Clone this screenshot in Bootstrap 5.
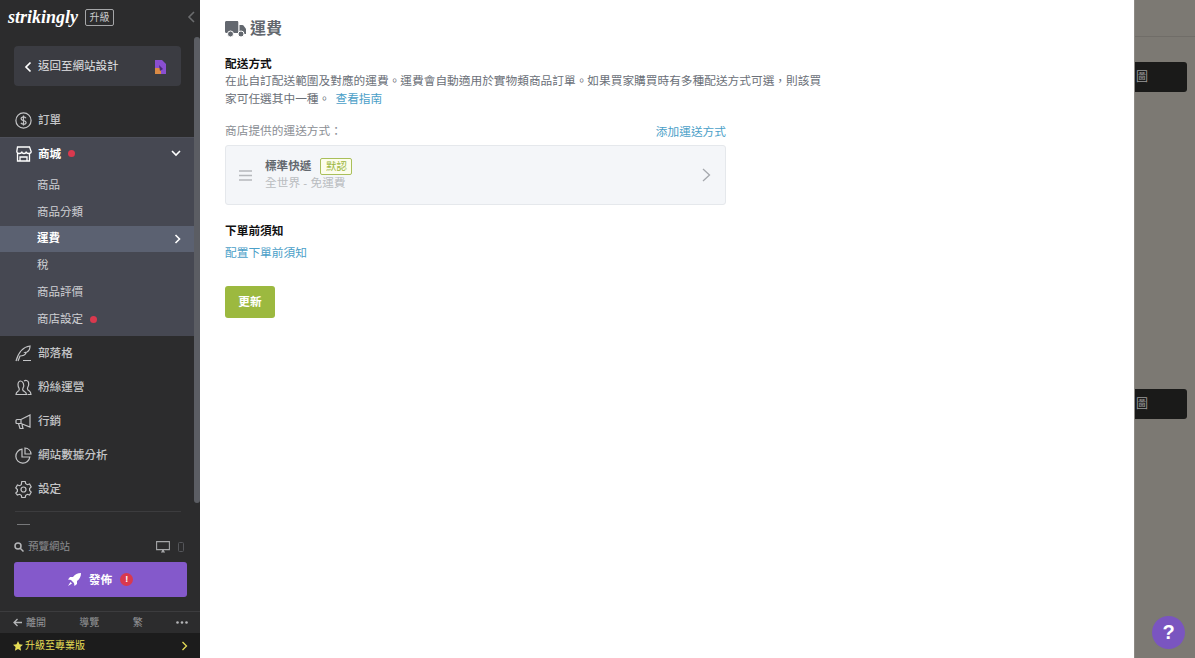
<!DOCTYPE html>
<html lang="zh-Hant">
<head>
    <meta charset="UTF-8">
    <meta name="viewport" content="width=device-width, initial-scale=1.0">
    <title>運費</title>
    <link href="https://cdn.jsdelivr.net/npm/bootstrap@5.3.0/dist/css/bootstrap.min.css" rel="stylesheet">
    <style>
        html, body { height: 100%; overflow: hidden; }
        body {
            font-family: "Liberation Sans", "Noto Sans CJK TC", sans-serif;
            font-size: 11.7px;
            background: #7c7973;
        }
        svg { display: block; flex: none; }

        /* sidebar */
        .side-panel { width: 200px; height: 658px; flex: none; background: #2c2c2d; color: #c9cacc; position: relative; overflow: hidden; }
        .side-scroll { position: absolute; top: 37px; right: 0; width: 6px; height: 466px; background: #5b5d63; border-radius: 3px; }
        .side-collapse { position: absolute; top: 11px; left: 187px; color: #6b6c6e; }
        .logo-row { height: 34px; padding-left: 8px; }
        .logo-text { font-family: "Liberation Serif", serif; font-style: italic; font-weight: 700; font-size: 18px; color: #fff; line-height: 1; width: 70px; }
        .upgrade-tag { margin-left: 7px; border: 1px solid #a5a6a8; border-radius: 2px; font-size: 10px; line-height: 15px; padding: 0 3.500px; color: #c9cacc; }
        .back-box { margin: 12px 19px 0 14px; height: 40px; background: #3b3c42; border-radius: 4px; padding: 1px 14px 0 10px; color: #e4e4e6; font-size: 11.500px; }
        .back-label { margin-left: 6px; }
        .menu-row { height: 34px; padding-left: 15px; gap: 6px; font-size: 11.600px; font-weight: 500; color: #c4c5c7; }
        .order-row { margin-top: 17px; }
        .shop-group { height: 199px; background: #464852; border-top: 1px solid #4e505a; }
        .shop-head { height: 31px; margin-bottom: 3px; padding: 0 19px 0 15px; gap: 6px; color: #fff; font-size: 11.600px; font-weight: 700; }
        .sub-item { height: 26.800px; padding: 0 19px 0 37px; font-size: 11.500px; color: #cfd0d4; }
        .sub-item.now { background: #5b6171; color: #fff; font-weight: 700; }
        .red-dot { width: 7px; height: 7px; border-radius: 50%; background: #d9394e; margin-left: 7px; }
        .head-dot { margin-left: 1px; }
        .side-line { margin: 5px 19px 0 15px; border-top: 1px solid #3c3c3e; }
        .cut-row { height: 16px; overflow: hidden; padding: 12px 0 0 17px; }
        .cut-row span { display: block; width: 13px; border-top: 1px solid #77787a; }
        .side-bottom { position: absolute; left: 0; right: 0; bottom: 0; background: #2c2c2d; }
        .preview-row { height: 24px; padding: 0 14px 6px; font-size: 10.500px; color: #8d8e91; }
        .phone-icon { margin: 0 2px 0 8px; }
        .publish-btn { margin: 0 13px 0 14px; height: 35px; width: 173px; background: #8459cb; border: 0; border-radius: 3px; color: #fff; font-size: 11.700px; font-weight: 700; padding: 0; }
        .alert-dot { width: 13px; height: 13px; border-radius: 50%; background: #d9394e; color: #fff; font-size: 9px; line-height: 13px; text-align: center; font-weight: 700; margin-left: 8px; }
        .foot-row { margin-top: 14px; height: 22px; border-top: 1px solid #3c3c3e; padding: 0 12px 0 13px; font-size: 10px; color: #96979a; }
        .pro-bar { height: 25px; background: #1c1c1c; padding: 0 12px 0 13px; color: #e5dc55; font-size: 10px; }
        .star-icon { margin-right: 2px; }

        /* panel */
        .main-panel { width: 935px; flex: none; background: #fff; padding: 0 25px; height: 658px; border-right: 1px solid #8d8a85; }
        .panel-title { height: 28px; margin-top: 15px; gap: 4px; color: #63686f; font-size: 16px; font-weight: 700; }
        .block-label { color: #111; font-size: 11.700px; font-weight: 700; line-height: 18px; }
        .first-label { margin-top: 12px; line-height: 17px; }
        .second-label { margin-top: 17px; }
        .block-text { color: #6b7078; line-height: 18px; width: 600px; margin: 0; }
        .plain-link { color: #4ba0c8; text-decoration: none; }
        .guide-link { margin-left: 2px; }
        .method-head { width: 501px; margin-top: 14px; }
        .method-head .block-text { width: auto; color: #8a8e94; padding-bottom: 1px; }
        .method-head .plain-link { line-height: 18px; }
        .method-box { width: 501px; height: 60px; margin-top: 4px; background: #f4f6f9; border: 1px solid #e5e8ec; border-radius: 3px; padding: 0 14px 0 13px; }
        .method-info { margin: 0 0 2px 13px; }
        .method-name { color: #63686f; font-size: 11.600px; font-weight: 700; line-height: 18px; }
        .method-sub { color: #b9bcc0; font-size: 11.700px; line-height: 16px; }
        .default-tag { border: 1px solid #a9bf5a; background: #fcfdec; color: #9ab53a; font-size: 10.500px; line-height: 15px; padding: 0 4.500px; border-radius: 2px; margin-left: 9px; font-weight: 400; }
        .notice-link { margin-top: 4px; line-height: 18px; }
        .save-btn { width: 50px; height: 32px; margin-top: 24px; background: #9cb93f; border: 0; border-radius: 3px; color: #fff; font-size: 11.700px; font-weight: 700; padding: 0; }

        /* dimmed page behind */
        .behind-page { flex: 1; height: 658px; overflow: hidden; background: #7c7973; }
        .behind-line { height: 37px; border-bottom: 1px solid #706d68; }
        .dark-btn { height: 30px; width: 52px; background: #1a1a19; border-radius: 0 3px 3px 0; color: #999; font-size: 12px; padding-left: 1px; }
        .btn-top { margin-top: 25px; }
        .btn-low { margin-top: 297px; }
        .help-bubble { position: absolute; left: 1152px; top: 616px; width: 33px; height: 33px; border-radius: 50%; background: #7a55c0; color: #fff; font-size: 20px; font-weight: 700; line-height: 33px; text-align: center; }
    </style>
</head>
<body class="d-flex">

    <!-- Sidebar -->
    <aside class="side-panel">
        <div class="logo-row d-flex align-items-center">
            <span class="logo-text">strikingly</span>
            <span class="upgrade-tag">升級</span>
        </div>
        <svg class="side-collapse" width="10" height="12" viewBox="0 0 10 12" fill="none" stroke="currentColor" stroke-width="1.6"><path d="M7 1 2 6l5 5"/></svg>
        <div class="side-scroll"></div>

        <div class="back-box d-flex align-items-center">
            <svg width="8" height="12" viewBox="0 0 8 12" fill="none" stroke="#fff" stroke-width="1.7"><path d="M6.500 1.500 2 6l4.500 4.500"/></svg>
            <span class="back-label flex-grow-1">返回至網站設計</span>
            <svg width="13" height="14" viewBox="0 0 13 14"><path d="M1 0h7l4 4v10H1z" fill="#8a4fd0"/><path d="M1 8h6v6H1z" fill="#d98a45"/><path d="M5 5l4 4-3 2z" fill="#4b2a78"/></svg>
        </div>

        <div class="menu-row order-row d-flex align-items-center">
            <svg width="17" height="17" viewBox="0 0 17 17" fill="none" stroke="#c4c5c7" stroke-width="1.200"><circle cx="8.500" cy="8.500" r="7.600"/><path d="M11 6.200c-.5-.9-1.400-1.300-2.500-1.300-1.300 0-2.400.7-2.400 1.800 0 2.500 5 1.200 5 3.700 0 1.100-1.100 1.800-2.600 1.800-1.100 0-2-.5-2.600-1.300M8.500 3.500v10"/></svg>
            <span>訂單</span>
        </div>

        <div class="shop-group">
            <div class="shop-head d-flex align-items-center">
                <svg width="17" height="16" viewBox="0 0 17 16" fill="none" stroke="#fff" stroke-width="1.300"><path d="M2.500 1h12l1.700 4.500c0 1.200-1.100 2-2.500 2-1.300 0-2.500-.8-2.500-2 0 1.200-1.100 2-2.200 2s-2.200-.8-2.200-2c0 1.200-1.200 2-2.500 2-1.400 0-2.500-.8-2.500-2zM2.500 7.500V15h12V7.500M5 15v-4h7v4"/></svg>
                <span>商城</span>
                <span class="red-dot head-dot"></span>
                <svg class="ms-auto" width="10" height="7" viewBox="0 0 10 7" fill="none" stroke="#fff" stroke-width="1.600"><path d="m1 1 4 4 4-4"/></svg>
            </div>
            <div class="sub-item d-flex align-items-center">商品</div>
            <div class="sub-item d-flex align-items-center">商品分類</div>
            <div class="sub-item now d-flex align-items-center">運費
                <svg class="ms-auto" width="7" height="10" viewBox="0 0 7 10" fill="none" stroke="#fff" stroke-width="1.600"><path d="m1.500 1 4 4-4 4"/></svg>
            </div>
            <div class="sub-item d-flex align-items-center">稅</div>
            <div class="sub-item d-flex align-items-center">商品評價</div>
            <div class="sub-item d-flex align-items-center">商店設定<span class="red-dot"></span></div>
        </div>

        <div class="menu-row d-flex align-items-center">
            <svg width="17" height="17" viewBox="0 0 17 17" fill="none" stroke="#c4c5c7" stroke-width="1.200"><path d="M1 16C3 9 7 2 15 1c0 3-1 5-3 6l-2 .5 1 .5c-1 2-3 3-6 3L3 16M8 15.500h8"/></svg>
            <span>部落格</span>
        </div>
        <div class="menu-row d-flex align-items-center">
            <svg width="17" height="17" viewBox="0 0 17 17" fill="none" stroke="#c4c5c7" stroke-width="1.200"><path d="M1 15.500h10.500c0-2.500-2.500-3-3.500-4-.6-.8-.4-1.600 0-2.400.8-1.300 1-3.200.3-4.800C7.600 2.800 6.800 2 5.700 2 4 2 3 3.500 3 5.500c0 1.300.4 2.600 1 3.600.4.800.4 1.600-.1 2.400-.8 1-2.900 1.500-2.900 4zM9 2c1.500-1 3.800-.8 4.500 1.200.5 1.600.1 3.800-.8 5.300-.4.800-.4 1.600.2 2.300.8 1 3.100 1.500 3.100 4.700h-3.500"/></svg>
            <span>粉絲運營</span>
        </div>
        <div class="menu-row d-flex align-items-center">
            <svg width="17" height="17" viewBox="0 0 17 17" fill="none" stroke="#c4c5c7" stroke-width="1.200"><path d="M15 2v12L6 10.500H2c-.7 0-1-.4-1-1v-2c0-.6.300-1 1-1h4zM3.500 10.500 5 15.500h3L7 11.500M6 6.500v4"/></svg>
            <span>行銷</span>
        </div>
        <div class="menu-row d-flex align-items-center">
            <svg width="17" height="17" viewBox="0 0 17 17" fill="none" stroke="#c4c5c7" stroke-width="1.200"><path d="M7 2.200A7 7 0 1 0 14.800 10H7zM10 1a6.500 6.500 0 0 1 6 6h-6z"/></svg>
            <span>網站數據分析</span>
        </div>
        <div class="menu-row d-flex align-items-center">
            <svg width="17" height="17" viewBox="0 0 17 17" fill="none" stroke="#c4c5c7" stroke-width="1.200"><path d="M6.800 1h3.400l.5 2.200 1.700 1 2.200-.7 1.600 2.900-1.600 1.600v2l1.600 1.600-1.600 2.900-2.200-.7-1.700 1-.5 2.200H6.800l-.5-2.200-1.700-1-2.200.7L.8 12.600l1.600-1.600V9L.8 7.400l1.600-2.900 2.200.7 1.700-1z" transform="translate(0 -.5)"/><circle cx="8.500" cy="8.500" r="2.500"/></svg>
            <span>設定</span>
        </div>
        <div class="side-line"></div>
        <div class="cut-row"><span></span></div>

        <div class="side-bottom">
            <div class="preview-row d-flex align-items-center">
                <svg width="10" height="10" viewBox="0 0 10 10" fill="none" stroke="#b5b6b8" stroke-width="1.500"><circle cx="4" cy="4" r="3"/><path d="m6.200 6.200 3.300 3.300"/></svg>
                <span class="ms-1 flex-grow-1">預覽網站</span>
                <svg width="14" height="12" viewBox="0 0 14 12" fill="none" stroke="#a5a6a8" stroke-width="1.100"><path d="M.6.600h12.800v8H.6zM5 11h4"/><path d="M7 9v2" stroke-width="2"/></svg>
                <svg class="phone-icon" width="6" height="10" viewBox="0 0 6 10" fill="none" stroke="#55565a"><rect x=".5" y=".5" width="5" height="9" rx="1"/></svg>
            </div>
            <button class="publish-btn d-flex align-items-center justify-content-center">
                <svg class="me-2" width="13" height="13" viewBox="0 0 13 13" fill="#fff"><path d="M13 0c-3.500 0-6 1.200-8 4H2L0 6.500l3 .5L6 10l.5 3L9 11V8c2.800-2 4-4.500 4-8z"/><path d="M2.500 9 0 13l4-2.500z"/></svg>
                <span>發佈</span>
                <span class="alert-dot">!</span>
            </button>
            <div class="foot-row d-flex align-items-center justify-content-between">
                <span class="d-flex align-items-center gap-1">
                    <svg width="9" height="9" viewBox="0 0 9 9" fill="none" stroke="#b5b6b8" stroke-width="1.300"><path d="M9 4.500H1M4.500 1 1 4.500 4.500 8"/></svg>
                    離開
                </span>
                <span>導覽</span>
                <span>繁</span>
                <svg width="12" height="3" viewBox="0 0 12 3" fill="#b5b6b8"><circle cx="1.500" cy="1.500" r="1.300"/><circle cx="6" cy="1.500" r="1.300"/><circle cx="10.500" cy="1.500" r="1.300"/></svg>
            </div>
            <div class="pro-bar d-flex align-items-center">
                <svg class="star-icon" width="10" height="10" viewBox="0 0 10 10" fill="#e5dc55"><path d="m5 0 1.500 3.300 3.500.4-2.600 2.400.7 3.600L5 8 1.900 9.700l.7-3.600L0 3.700l3.500-.4z"/></svg>
                <span class="flex-grow-1">升級至專業版</span>
                <svg width="7" height="10" viewBox="0 0 7 10" fill="none" stroke="#e5dc55" stroke-width="1.300"><path d="m1.500 1 4 4-4 4"/></svg>
            </div>
        </div>
    </aside>

    <!-- Shipping panel -->
    <main class="main-panel">
        <div class="panel-title d-flex align-items-center">
            <svg width="21" height="18" viewBox="0 0 21 18" fill="#63686f"><path d="M1.500 1H12c.8 0 1.300.5 1.300 1.300V13H1.500C.6 13 0 12.400 0 11.500v-9C0 1.600.6 1 1.500 1zM14.500 5h2.800c.5 0 .9.200 1.200.6l2 2.700c.3.300.5.700.5 1.200V14H14.500z"/><circle cx="5.500" cy="14" r="3" stroke="#fff"/><circle cx="16" cy="14" r="3" stroke="#fff"/></svg>
            <span>運費</span>
        </div>

        <div class="block-label first-label">配送方式</div>
        <p class="block-text">在此自訂配送範圍及對應的運費。運費會自動適用於實物類商品訂單。如果買家購買時有多種配送方式可選，則該買家可任選其中一種。 <a class="plain-link guide-link" href="#">查看指南</a></p>

        <div class="method-head d-flex justify-content-between align-items-end">
            <span class="block-text">商店提供的運送方式：</span>
            <a class="plain-link" href="#">添加運送方式</a>
        </div>
        <div class="method-box d-flex align-items-center">
            <svg width="13" height="11" viewBox="0 0 13 11" fill="none" stroke="#b5b8bc" stroke-width="1.300"><path d="M0 1h13M0 5.500h13M0 10h13"/></svg>
            <div class="method-info flex-grow-1">
                <div class="method-name d-flex align-items-center">標準快遞<span class="default-tag">默認</span></div>
                <div class="method-sub">全世界 - 免運費</div>
            </div>
            <svg width="9" height="14" viewBox="0 0 9 14" fill="none" stroke="#a5a8ad" stroke-width="1.300"><path d="m1 1 6.500 6L1 13"/></svg>
        </div>

        <div class="block-label second-label">下單前須知</div>
        <a class="plain-link notice-link d-block" href="#">配置下單前須知</a>
        <button class="save-btn d-block">更新</button>
    </main>

    <!-- Dimmed editor page behind the panel -->
    <section class="behind-page">
        <div class="behind-line"></div>
        <div class="dark-btn btn-top d-flex align-items-center">圖</div>
        <div class="dark-btn btn-low d-flex align-items-center">圖</div>
    </section>
    <div class="help-bubble">?</div>

    <script src="https://cdn.jsdelivr.net/npm/bootstrap@5.3.0/dist/js/bootstrap.bundle.min.js"></script>
</body>
</html>
